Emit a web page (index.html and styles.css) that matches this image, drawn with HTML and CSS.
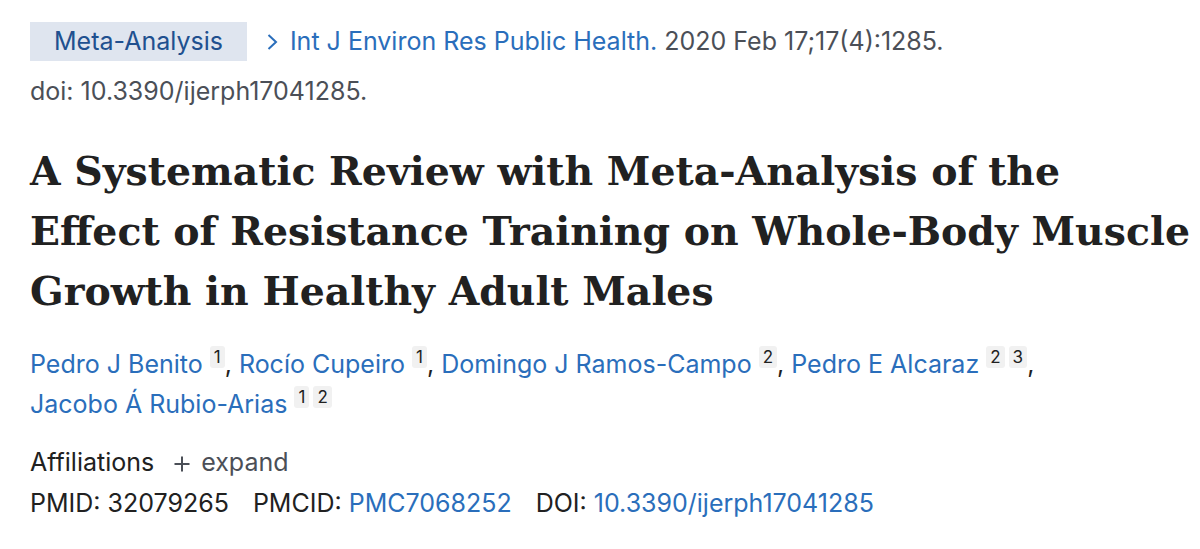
FILE: index.html
```html
<!DOCTYPE html>
<html lang="en">
<head>
<meta charset="utf-8">
<title>PubMed article</title>
<link rel="stylesheet" href="styles.css">
</head>
<body>
<main class="article">
  <div class="cit-row">
    <span class="badge">Meta-Analysis</span>
    <span class="cit"><a class="journal" href="#"><svg class="chev" width="12" height="18" viewBox="0 0 12 18"><polyline points="1.5,2 9,9 1.5,16" fill="none" stroke="#2a6ebb" stroke-width="2"/></svg>Int J Environ Res Public Health.</a> 2020 Feb 17;17(4):1285.</span>
  </div>
  <div class="doi-row">doi: 10.3390/ijerph17041285.</div>

  <h1 class="title">A Systematic Review with Meta-Analysis of the Effect of Resistance Training on Whole-Body Muscle Growth in Healthy Adult Males</h1>

  <div class="authors">
    <span class="author"><a href="#">Pedro J Benito</a> <sup class="aff"><span>1</span></sup>,</span>
    <span class="author"><a href="#">Rocío Cupeiro</a> <sup class="aff"><span>1</span></sup>,</span>
    <span class="author"><a href="#">Domingo J Ramos-Campo</a> <sup class="aff"><span>2</span></sup>,</span>
    <span class="author"><a href="#">Pedro E Alcaraz</a> <sup class="aff"><span>2</span><span>3</span></sup>,</span>
    <span class="author"><a href="#">Jacobo Á Rubio-Arias</a> <sup class="aff"><span>1</span><span>2</span></sup></span>
  </div>

  <div class="affil-row">
    <span class="affil-label">Affiliations</span>
    <span class="expand"><svg class="plus" width="18" height="18" viewBox="0 0 18 18"><path d="M9 1.5v15M1.5 9h15" stroke="#4b4f57" stroke-width="2" fill="none"/></svg>expand</span>
  </div>

  <div class="ids">
    <span class="id">PMID: 32079265</span>
    <span class="id">PMCID: <a href="#">PMC7068252</a></span>
    <span class="id">DOI: <a href="#">10.3390/ijerph17041285</a></span>
  </div>
</main>
</body>
</html>
```

FILE: styles.css
```css
html, body {
  margin: 0;
  padding: 0;
  background: #ffffff;
}
body {
  font-family: Inter, "Liberation Sans", sans-serif;
  color: #212121;
}
a {
  color: #2a6ebb;
  text-decoration: none;
}
.article {
  padding: 22px 0 0 30px;
}
.cit-row {
  display: flex;
  align-items: center;
  gap: 20px;
  font-size: 25px;
  line-height: 39px;
}
.badge {
  background: #dfe5ef;
  color: #20508f;
  padding: 0 24px;
  height: 39px;
}
.cit {
  color: #4b4f57;
}
.chev {
  margin-right: 11px;
  vertical-align: -1px;
}
.doi-row {
  font-size: 25px;
  line-height: 30px;
  margin-top: 15px;
  color: #4b4f57;
}
.title {
  font-family: "DejaVu Serif", "Liberation Serif", serif;
  font-weight: bold;
  font-size: 39.4px;
  line-height: 60px;
  color: #212121;
  margin: 35px 0 0 0;
  max-width: 1170px;
}
.authors {
  margin-top: 25px;
  font-size: 25px;
  line-height: 37px;
  color: #212121;
  max-width: 1100px;
}
.author {
  white-space: nowrap;
}
.aff {
  font-size: 17px;
  vertical-align: 0;
  position: relative;
  top: -10px;
}
.aff span {
  display: inline-block;
  background: #f1f1f1;
  border-radius: 3px;
  padding: 0 4px;
  line-height: 22px;
  margin-right: 4px;
}
.aff span:last-child {
  margin-right: 0;
}
.affil-row {
  margin-top: 20px;
  font-size: 25px;
  line-height: 32px;
}
.expand {
  color: #4b4f57;
  margin-left: 12px;
}
.plus {
  margin-right: 10px;
  vertical-align: -2px;
}
.ids {
  margin-top: 9px;
  font-size: 25px;
  line-height: 32px;
  display: flex;
  gap: 24px;
}
```
